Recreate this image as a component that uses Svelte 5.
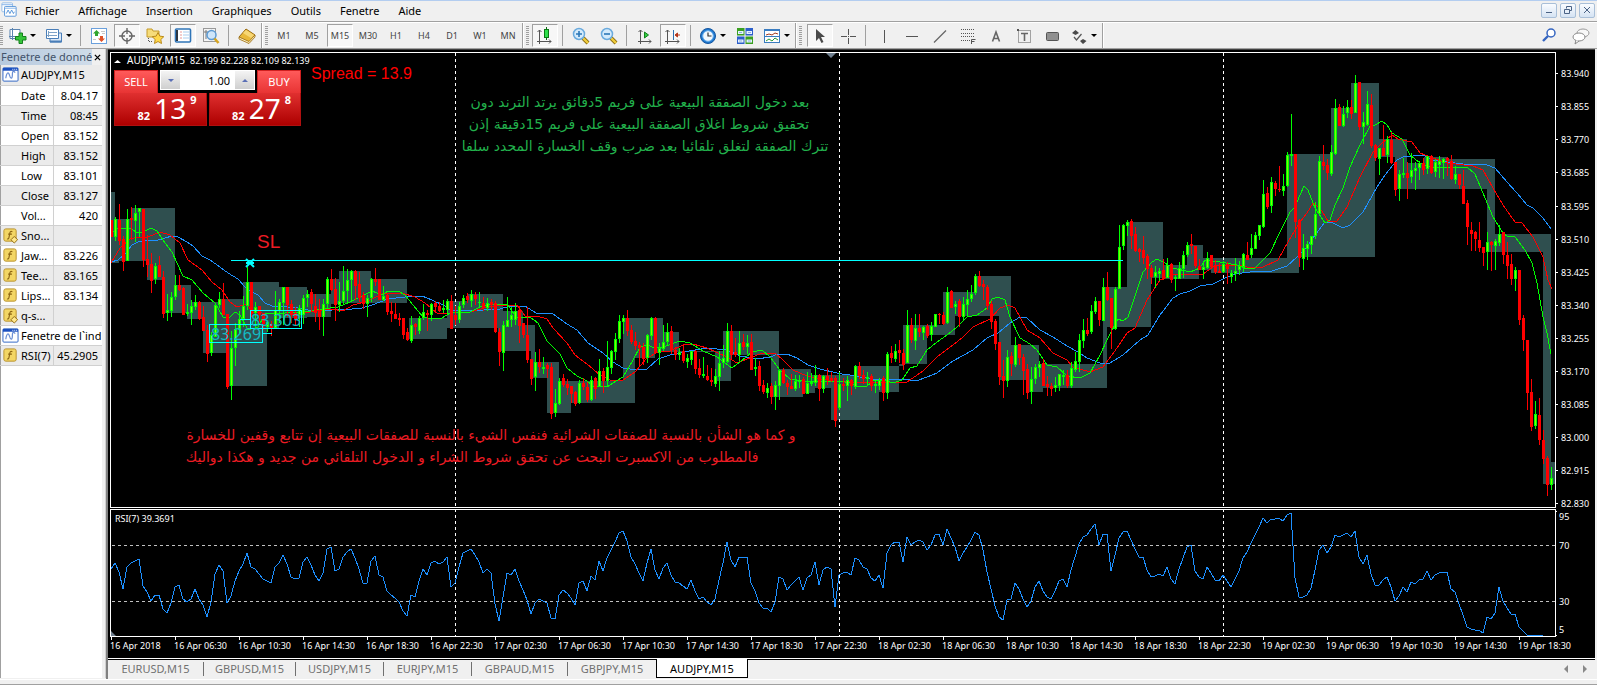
<!--
  Trading terminal: menu bar, toolbars, data window and a candlestick chart
  with three moving averages and an RSI pane below it.
-->
<script lang="ts">
	// direction, high, body top, body bottom, low (chart units, one bar every 4)
	const bars = `
r 220 220 237 237,g 217 219 237 241,r 204 220 241 245,r 236 239 262 271,g 209 219 261 261,r 207 218 220 240,
g 205 213 221 242,g 208 208 212 237,r 209 209 260 267,r 235 259 265 277,r 253 264 281 293,g 263 266 279 284,
r 256 265 277 277,r 271 277 314 318,g 294 310 313 321,g 292 297 311 317,g 275 285 297 300,r 275 285 290 291,
r 287 288 315 315,g 304 312 314 316,g 300 306 313 325,g 295 302 307 310,r 301 302 319 320,r 306 317 331 331,
r 325 330 354 362,g 332 335 353 356,g 303 305 337 337,g 292 299 305 308,r 283 299 315 315,r 314 314 387 389,
g 331 348 386 400,g 323 329 348 366,g 311 319 330 333,g 296 306 319 327,g 267 282 306 310,r 282 282 314 317,
g 302 307 313 327,r 306 306 315 323,r 313 314 324 330,g 320 322 327 332,r 321 324 329 336,g 291 310 328 329,
g 299 302 311 323,g 287 287 303 325,r 287 287 305 317,r 300 304 315 323,r 307 313 319 325,g 305 308 315 327,
g 295 298 315 324,g 290 294 298 307,r 289 292 304 311,r 294 306 313 322,r 299 310 317 330,g 299 304 317 336,
g 277 279 304 308,r 269 279 290 291,r 278 289 305 321,g 282 301 305 312,g 266 291 301 304,g 269 280 291 304,
g 270 271 280 302,r 270 271 286 300,r 272 284 298 302,r 292 295 304 309,g 295 298 304 317,g 278 279 298 302,
r 268 279 282 286,r 279 279 300 300,g 286 296 300 301,r 294 295 312 315,r 302 311 314 322,r 303 314 319 319,
r 313 318 320 326,r 318 318 335 339,r 328 332 340 341,g 316 325 341 343,r 323 324 327 335,g 316 318 331 334,
g 304 312 318 320,r 310 313 315 331,g 303 304 315 321,r 301 303 307 313,r 302 306 311 312,g 300 308 310 313,
g 299 301 310 315,r 295 301 329 329,r 306 315 320 325,g 302 306 320 323,g 295 298 305 308,r 293 296 300 303,
g 290 294 301 307,r 292 295 299 305,g 292 302 303 307,r 297 303 308 311,g 298 303 308 311,r 299 302 305 310,
r 301 303 332 333,r 328 332 352 366,g 321 325 353 371,g 297 320 327 327,g 307 315 320 327,g 303 311 320 325,
r 306 310 326 343,r 323 323 335 338,r 307 335 360 363,r 359 359 379 385,g 352 362 377 391,r 349 362 367 373,
g 357 367 369 374,r 363 365 369 378,r 363 367 414 419,g 389 403 413 417,g 378 381 404 405,r 374 378 385 387,
r 379 384 388 395,r 386 386 394 403,r 391 392 404 406,g 380 383 403 404,r 378 383 387 390,r 382 387 400 402,
g 376 380 400 401,r 377 378 389 399,g 359 371 387 387,r 368 371 381 393,g 341 367 381 387,g 350 351 368 374,
g 333 339 352 360,g 315 321 339 343,g 315 318 322 334,r 310 318 331 336,r 325 330 342 344,r 332 341 346 350,
r 342 345 348 367,r 343 347 359 365,g 334 335 358 363,g 317 318 336 340,r 317 318 353 353,g 343 348 353 365,
g 325 342 349 351,g 323 332 342 345,r 326 331 350 354,r 347 350 355 360,g 348 352 355 360,r 344 351 361 363,
g 354 358 362 368,g 351 351 360 365,r 350 351 369 374,r 359 368 375 378,g 357 374 376 378,r 365 376 380 381,
r 368 380 382 386,g 369 376 384 387,g 351 363 377 391,g 345 358 363 368,g 323 331 362 363,r 325 331 355 359,
r 338 352 355 357,g 331 343 355 361,r 334 342 347 350,g 335 343 347 354,r 334 342 370 370,g 358 367 369 376,
r 361 366 386 391,r 380 385 392 394,g 383 388 393 398,r 383 386 397 404,g 381 385 397 410,g 369 370 386 400,
r 368 370 383 384,r 380 383 387 395,r 374 386 389 389,g 375 381 389 391,g 375 380 382 388,r 377 379 394 394,
g 372 383 394 394,g 373 382 384 386,g 365 375 383 386,r 374 375 389 401,g 375 376 389 393,r 368 376 380 385,
r 372 378 380 382,r 376 378 421 427,g 372 384 408 410,r 378 384 386 391,g 376 380 386 401,r 379 380 386 395,
g 365 366 387 389,r 362 366 376 379,r 370 375 379 384,g 372 377 379 385,r 374 376 386 391,g 380 384 386 393,
g 378 380 386 390,r 376 378 393 401,g 352 354 393 399,r 346 353 358 363,g 344 351 359 362,r 340 350 353 363,
r 349 353 365 370,g 310 325 363 363,r 318 325 340 343,g 314 328 341 350,r 314 328 332 337,g 326 327 333 340,
r 324 326 336 338,g 322 326 335 341,g 314 314 327 327,r 313 314 315 324,r 312 315 324 325,g 287 292 323 324,
r 290 291 308 308,g 301 304 307 314,r 299 301 317 327,g 297 304 317 320,g 290 299 305 316,g 285 294 299 302,
g 274 276 293 295,r 271 276 286 287,r 280 284 287 300,r 285 287 306 310,r 301 304 322 329,r 319 321 344 350,
r 342 342 377 385,r 360 376 381 398,g 350 357 381 387,r 352 356 364 376,g 337 345 365 367,r 344 344 358 365,
r 354 357 371 395,r 364 369 393 399,g 367 379 392 404,g 364 367 379 384,g 361 364 368 377,r 359 363 386 386,
r 376 384 387 396,r 383 386 389 396,g 377 385 388 392,g 374 374 386 391,g 370 375 377 385,r 370 375 386 388,
g 362 368 386 388,g 352 361 370 372,g 334 340 362 372,g 319 330 341 348,r 318 330 334 336,g 305 311 332 334,
g 297 301 312 314,r 301 301 320 326,g 278 287 321 321,r 272 287 300 301,r 298 298 328 349,g 287 289 329 330,
g 225 247 289 289,g 224 225 246 250,g 220 222 226 236,r 219 221 236 249,r 227 234 251 252,r 248 249 252 262,
r 236 250 258 264,r 254 256 269 279,r 265 268 277 284,g 266 272 277 288,g 268 271 274 281,r 259 270 279 280,
g 258 265 278 278,r 263 264 280 283,g 275 277 279 291,g 262 268 279 279,g 251 255 269 278,g 242 245 255 257,
r 234 244 246 254,r 246 246 266 268,r 259 266 270 270,g 263 267 270 279,g 252 258 268 269,r 255 255 267 268,
r 260 265 272 274,r 263 271 273 273,g 261 264 272 273,r 262 264 269 284,g 270 273 277 283,g 258 271 274 281,
g 261 266 270 275,g 253 254 267 272,r 242 255 260 260,g 234 248 255 258,g 232 235 249 249,g 225 225 236 240,
g 180 194 227 228,r 187 193 207 209,g 177 182 206 213,r 181 183 189 196,r 166 189 190 192,g 174 186 191 196,
g 152 155 186 187,g 114 154 156 166,r 154 154 222 238,r 219 220 258 267,g 234 248 259 270,g 241 244 249 260,
g 236 236 245 254,g 202 214 236 239,g 156 161 214 214,r 145 162 166 170,r 159 165 173 180,g 145 152 174 176,
g 99 108 154 155,r 104 107 126 126,g 106 114 126 127,g 100 107 113 118,r 100 107 114 119,g 75 83 113 113,
r 82 82 127 130,g 112 122 127 144,g 91 104 125 126,r 94 105 146 148,r 144 145 158 161,g 148 148 159 175,
r 125 148 156 156,g 136 139 155 163,r 132 140 163 164,r 162 162 190 196,g 170 174 189 201,g 158 173 175 178,
r 162 173 178 199,g 153 170 177 183,g 162 168 171 190,g 161 163 168 180,r 158 163 170 175,g 156 156 169 174,
r 155 156 173 174,g 159 162 172 177,g 156 161 165 178,g 158 159 163 179,r 157 158 161 176,r 155 161 179 180,
g 166 174 180 184,r 174 174 185 189,r 170 186 204 204,r 200 203 227 245,r 222 230 234 251,r 231 232 239 251,
r 222 240 248 252,r 247 247 253 266,g 232 242 252 270,r 241 242 245 271,g 239 241 246 270,g 225 234 243 246,
r 232 232 255 264,r 242 255 266 279,r 254 264 279 285,g 267 270 279 291,r 270 270 320 325,r 315 318 340 351,
r 340 340 393 410,r 379 392 427 431,g 401 414 426 429,r 398 415 440 445,r 430 440 459 464,r 456 458 485 496,
g 467 478 485 490`
		.split(',')
		.map((row, i) => {
			const [dir, ...v] = row.trim().split(' ');
			const [high, top, bottom, low] = v.map(Number);
			return { x: 111.5 + i * 4, up: dir === 'g', high, top, bottom, low };
		});

	const wicks = (up: boolean) =>
		bars.filter((b) => b.up === up).map((b) => `M${b.x} ${b.high}V${b.low}`).join('');
	const bodies = (up: boolean) =>
		bars.filter((b) => b.up === up).map((b) => `M${b.x} ${b.top}V${Math.max(b.bottom, b.top + 1)}`).join('');
	const cores = bars
		.filter((b) => b.up && b.bottom - b.top > 2)
		.map((b) => `M${b.x} ${b.top + 1}V${b.bottom - 1}`)
		.join('');

	// x1, y1, x2, y2
	const zones = `111 192 115 263,115 219 119 263,119 219 132 261,132 208 147 261,147 208 165 280,163 208 175 313,
175 285 191 313,187 302 203 319,203 302 229 353,219 299 243 353,229 299 243 386,243 282 267 386,267 282 279 328,
279 287 307 318,307 294 331 317,331 279 339 304,339 271 371 303,371 279 407 303,409 318 447 339,447 301 468 328,
468 294 503 328,498 294 503 351,503 311 523 351,523 325 535 351,531 325 535 378,535 362 547 378,547 362 559 413,
559 381 571 413,571 381 635 403,623 318 635 403,635 318 655 358,655 318 663 352,663 332 679 352,679 351 723 352,
715 351 731 381,723 331 779 355,771 331 779 397,779 369 803 397,803 369 811 393,811 375 815 393,815 375 831 388,
831 375 855 420,855 366 879 420,879 366 899 392,899 364 903 366,903 325 927 364,927 325 943 335,943 292 955 335,
955 292 975 316,975 276 1011 316,999 276 1011 380,1011 345 1039 380,1029 345 1039 392,1039 364 1043 392,
1043 364 1107 388,1103 287 1107 388,1107 287 1127 327,1127 222 1151 327,1151 222 1163 278,1163 265 1187 279,
1187 245 1199 279,1199 245 1203 270,1203 258 1211 270,1211 258 1287 273,1287 154 1299 273,1299 154 1331 257,
1331 108 1351 257,1351 83 1375 257,1375 83 1379 157,1379 139 1395 157,1395 139 1407 189,1407 163 1424 189,
1424 157 1447 189,1447 159 1495 189,1487 159 1495 252,1495 234 1551 252,1543 234 1551 484,1551 462 1555 484`
		.split(',')
		.map((z) => {
			const [x1, y1, x2, y2] = z.trim().split(' ').map(Number);
			return `M${x1} ${y1}H${x2}V${y2}H${x1}Z`;
		})
		.join('');

	const jaws =
		'111,262 118,260 125,254 132,245 138,242 148,240 158,240 172,236 178,237 187,242 193,246 202,256 210,260 220,267 228,273 238,279 245,287 252,292 258,295 265,303 272,306 287,307 298,308 308,310 332,310 352,309 362,308 372,305 388,299 405,297 422,296 432,300 445,306 450,310 483,310 500,309 510,306 525,306 536,313 553,314 567,324 577,330 588,343 603,353 613,362 623,368 637,370 647,369 658,359 670,355 683,352 707,348 727,350 740,356 757,359 770,357 778,354 787,354 797,358 808,365 820,369 837,373 842,374 850,375 860,377 873,379 903,379 916,381 927,377 937,373 953,361 973,350 987,338 998,333 1010,323 1020,317 1027,318 1040,330 1053,337 1067,346 1078,352 1087,358 1100,363 1110,363 1123,355 1140,340 1148,335 1160,315 1173,298 1180,294 1190,291 1200,286 1213,284 1225,278 1235,274 1250,272 1272,271 1287,266 1297,257 1307,247 1315,235 1325,222 1333,223 1343,228 1350,225 1363,212 1377,187 1385,175 1397,160 1403,157 1413,156 1423,155 1433,160 1447,162 1463,164 1487,165 1495,168 1507,182 1517,193 1527,205 1533,208 1543,218 1551,229';
	const teeth =
		'111,263 120,248 130,239 138,237 148,237 160,232 170,235 180,243 188,260 202,270 212,282 222,290 230,302 237,307 247,304 252,312 262,313 285,314 300,314 315,311 332,309 343,311 353,305 368,301 382,294 402,293 415,297 425,303 438,314 450,313 470,312 488,307 500,305 517,305 525,316 537,316 547,319 553,328 567,343 575,355 587,364 600,375 610,380 623,380 635,372 647,358 658,352 670,351 683,345 693,344 707,348 727,357 737,363 747,359 760,354 775,353 783,360 793,370 807,376 820,379 833,381 850,382 870,383 883,382 907,382 923,371 937,357 953,345 963,337 973,327 990,319 1000,308 1008,305 1015,308 1027,330 1040,338 1053,353 1067,360 1073,367 1090,372 1103,367 1117,348 1127,333 1135,328 1147,300 1160,280 1173,275 1203,274 1213,267 1220,265 1237,265 1247,267 1263,267 1278,260 1288,242 1300,222 1307,213 1313,203 1320,208 1328,221 1337,221 1347,207 1360,177 1373,152 1382,143 1392,135 1398,139 1412,142 1420,153 1430,157 1447,163 1473,166 1483,170 1493,188 1503,205 1515,222 1522,223 1533,237 1543,257 1548,280 1552,289';
	const lips =
		'112,233 118,228 132,229 137,233 143,232 151,228 157,231 163,240 172,252 183,276 192,280 203,293 215,303 223,317 230,317 235,312 240,315 248,330 258,327 265,314 285,313 305,312 322,309 338,307 352,301 372,291 382,295 388,291 398,291 405,295 413,305 423,317 432,319 442,318 450,313 470,312 480,307 490,304 507,304 517,318 530,317 538,323 547,341 560,354 567,368 577,376 587,381 593,386 607,387 613,383 623,377 632,362 640,347 647,345 655,348 663,347 680,341 690,343 703,351 717,357 732,368 740,362 752,352 762,350 770,357 780,370 790,379 803,381 840,381 850,383 857,386 867,386 873,381 883,380 893,383 902,380 910,368 917,366 927,350 937,342 947,335 957,327 967,317 977,315 987,308 992,299 998,297 1005,300 1010,317 1020,338 1030,344 1037,350 1047,365 1057,367 1067,376 1080,378 1090,373 1100,355 1108,338 1118,319 1123,321 1128,317 1137,290 1143,272 1152,262 1157,259 1165,263 1173,268 1190,272 1200,268 1205,260 1220,262 1237,265 1247,269 1255,268 1270,253 1280,232 1290,212 1295,207 1300,195 1304,186 1308,190 1315,208 1325,223 1330,220 1335,205 1343,188 1350,167 1360,145 1370,126 1375,125 1382,121 1387,125 1392,133 1402,139 1410,155 1420,163 1430,167 1467,167 1475,174 1483,193 1493,217 1503,233 1507,236 1515,237 1525,250 1532,263 1537,283 1543,317 1547,333 1551,354';

	const rsi = [
		69, 63, 72, 89, 67, 63, 61, 59, 86, 92, 101, 95, 95, 109, 113, 103, 87, 85, 99, 102, 99, 89, 99, 105, 117, 102, 74,
		65, 71, 103, 96, 81, 71, 64, 53, 67, 69, 74, 79, 81, 83, 67, 63, 55, 64, 77, 79, 78, 62, 57, 65, 75, 81, 73, 49, 47,
		71, 69, 57, 52, 49, 58, 69, 83, 83, 61, 56, 75, 77, 91, 95, 98, 102, 111, 116, 95, 97, 81, 69, 75, 63, 61, 64, 62,
		57, 87, 83, 67, 53, 51, 49, 55, 62, 73, 69, 73, 104, 121, 97, 73, 75, 69, 81, 90, 100, 114, 103, 99, 101, 103, 118,
		119, 95, 90, 93, 98, 105, 83, 81, 91, 76, 80, 61, 71, 58, 50, 42, 33, 31, 41, 57, 64, 73, 81, 63, 49, 70, 79, 68,
		63, 75, 82, 83, 86, 89, 80, 91, 99, 97, 102, 105, 99, 80, 63, 42, 60, 67, 57, 57, 57, 83, 91, 103, 108, 108, 112,
		102, 77, 79, 90, 85, 81, 77, 90, 78, 75, 62, 85, 70, 67, 69, 107, 75, 73, 72, 75, 58, 60, 67, 69, 78, 81, 75, 88,
		53, 45, 42, 42, 62, 37, 45, 42, 40, 42, 50, 45, 35, 34, 45, 29, 38, 47, 61, 53, 47, 40, 32, 35, 50, 72, 89, 106,
		117, 120, 100, 99, 83, 89, 99, 107, 101, 87, 81, 91, 97, 99, 91, 81, 79, 87, 70, 57, 44, 37, 35, 29, 24, 45, 34, 34,
		71, 55, 38, 32, 31, 40, 49, 57, 57, 70, 77, 76, 74, 76, 67, 79, 84, 69, 58, 47, 45, 71, 77, 79, 67, 73, 80, 81, 75,
		81, 87, 79, 71, 58, 52, 43, 35, 27, 18, 23, 19, 19, 18, 21, 15, 13, 78, 97, 97, 95, 88, 70, 50, 45, 53, 47, 35, 37,
		35, 33, 37, 31, 57, 64, 55, 74, 85, 85, 80, 77, 87, 101, 96, 87, 92, 82, 84, 80, 79, 71, 80, 75, 73, 72, 72, 89, 92,
		104, 115, 127, 129, 130, 130, 133, 117, 119, 113, 87, 101, 108, 114, 114, 127, 131, 135, 135, 135, 135, 135
	]
		.map((y, i) => `${111 + i * 4},${500 + y}`)
		.join(' ');

	const prices = [
		['83.940', 73], ['83.855', 106], ['83.770', 139], ['83.685', 172], ['83.595', 206], ['83.510', 239], ['83.425', 272],
		['83.340', 305], ['83.255', 338], ['83.170', 371], ['83.085', 404], ['83.000', 437], ['82.915', 470], ['82.830', 503]
	] as [string, number][];
	const levels = [['95', 516], ['70', 545], ['30', 601], ['5', 629]] as [string, number][];
	const times = [
		'16 Apr 2018', '16 Apr 06:30', '16 Apr 10:30', '16 Apr 14:30', '16 Apr 18:30', '16 Apr 22:30', '17 Apr 02:30',
		'17 Apr 06:30', '17 Apr 10:30', '17 Apr 14:30', '17 Apr 18:30', '17 Apr 22:30', '18 Apr 02:30', '18 Apr 06:30',
		'18 Apr 10:30', '18 Apr 14:30', '18 Apr 18:30', '18 Apr 22:30', '19 Apr 02:30', '19 Apr 06:30', '19 Apr 10:30',
		'19 Apr 14:30', '19 Apr 18:30'
	];

	const menus = ['Fichier', 'Affichage', 'Insertion', 'Graphiques', 'Outils', 'Fenetre', 'Aide'];
	const frames = ['M1', 'M5', 'M15', 'M30', 'H1', 'H4', 'D1', 'W1', 'MN'];
	const tabs = ['EURUSD,M15', 'GBPUSD,M15', 'USDJPY,M15', 'EURJPY,M15', 'GBPAUD,M15', 'GBPJPY,M15', 'AUDJPY,M15'];
	const rows = [
		{ label: 'AUDJPY,M15', icon: 'window' },
		{ label: 'Date', value: '8.04.17' },
		{ label: 'Time', value: '08:45' },
		{ label: 'Open', value: '83.152' },
		{ label: 'High', value: '83.152' },
		{ label: 'Low', value: '83.101' },
		{ label: 'Close', value: '83.127' },
		{ label: 'Vol...', value: '420' },
		{ label: 'Sno...', value: '', icon: 'fnd' },
		{ label: 'Jaw...', value: '83.226', icon: 'fn' },
		{ label: 'Tee...', value: '83.165', icon: 'fn' },
		{ label: 'Lips...', value: '83.134', icon: 'fn' },
		{ label: 'q-s...', value: '', icon: 'fnd' },
		{ label: 'Fenetre de l`ind', icon: 'window' },
		{ label: 'RSI(7)', value: '45.2905', icon: 'fn' }
	];

	type Tool = { icon: string; name: string; on?: boolean; drop?: boolean };
	const fileTools: (Tool | null)[] = [
		{ icon: 'new', name: 'Nouveau graphique', drop: true },
		{ icon: 'profiles', name: 'Profils', drop: true },
		null,
		{ icon: 'market', name: 'Observation du marché' },
		{ icon: 'target', name: 'Fenetre de données', on: true },
		{ icon: 'navigator', name: 'Navigateur' },
		{ icon: 'terminal', name: 'Terminal', on: true },
		{ icon: 'tester', name: 'Testeur de stratégie' },
		null,
		{ icon: 'order', name: 'Nouvel ordre' }
	];
	const chartTools: (Tool | null)[] = [
		{ icon: 'candle', name: 'Chandeliers', on: true },
		null,
		{ icon: 'zoomin', name: 'Zoom avant' },
		{ icon: 'zoomout', name: 'Zoom arrière' },
		null,
		{ icon: 'scroll', name: 'Défilement automatique' },
		{ icon: 'shift', name: 'Décalage du graphique', on: true },
		null,
		{ icon: 'clock', name: 'Périodes', drop: true },
		{ icon: 'tile', name: 'Mosaïque' },
		{ icon: 'template', name: 'Modèles', drop: true }
	];
	const drawTools: (Tool | null)[] = [
		{ icon: 'cursor', name: 'Curseur', on: true },
		{ icon: 'cross', name: 'Réticule' },
		null,
		{ icon: 'vline', name: 'Ligne verticale' },
		{ icon: 'hline', name: 'Ligne horizontale' },
		{ icon: 'trend', name: 'Ligne de tendance' },
		{ icon: 'fibo', name: 'Fibonacci' },
		{ icon: 'text', name: 'Texte' },
		{ icon: 'label', name: 'Étiquette' },
		{ icon: 'rect', name: 'Rectangle' },
		{ icon: 'arrows', name: 'Flèches', drop: true }
	];

	let volume = $state('1.00');
	let frame = $state('M15');
	let activeTab = $state('AUDJPY,M15');
</script>

{#snippet glyph(name: string)}
	<svg class="glyph" viewBox="0 0 18 18" aria-hidden="true">
		{#if name === 'new'}
			<path d="M1 2.500h10v9H1z" fill="#fff" stroke="#5b84b0" />
			<path d="M3.500 1v12M0 9.500h12" stroke="#5b84b0" />
			<path d="M10 6h3.500v3.500H17V13h-3.500v3.500H10V13H6.500V9.500H10z" fill="#35c43a" stroke="#14801c" />
		{:else if name === 'profiles'}
			<path d="M5 6h11.500v9H5z" fill="#dbe9f8" stroke="#4a7eb8" />
			<path d="M1.500 2.500h12v9h-12z" fill="#fff" stroke="#4a7eb8" />
			<path d="M3.500 4v6M2 8.500h10M3 5.500h9" fill="none" stroke="#7fa3c8" />
			<path d="M5 14.500h11.500" stroke="#4a7eb8" stroke-width="2" />
		{:else if name === 'market'}
			<rect x="1.5" y="1.5" width="15" height="15" fill="#fff" stroke="#6ba0dc" />
			<path d="M6.500 3l3.500 3.500H8V9H5V6.500H3z" fill="#2fa52f" />
			<path d="M11.500 15L8 11.500h2V9h3v2.500h2z" fill="#e0532a" />
			<path d="M11 4.500h4M12 6.500h3M3 12.500h3" stroke="#c8c8c8" />
		{:else if name === 'target'}
			<circle cx="9" cy="9" r="5" fill="none" stroke="#666" stroke-width="1.400" />
			<path d="M9 1v6M9 11v6M1 9h6M11 9h6" stroke="#666" stroke-width="1.400" />
		{:else if name === 'navigator'}
			<path d="M1 2h5l1 2h6v6H1z" fill="#f6dc7a" stroke="#c49a28" />
			<path d="M2.500 11v4M3 14.500h4" stroke="#555" stroke-dasharray="1 1" />
			<path d="M12 5.500l1.800 3.600 4 .6-3 2.800.7 4-3.500-2-3.500 2 .7-4-3-2.800 4-.6z" fill="#ffd84a" stroke="#b98a1d" />
		{:else if name === 'terminal'}
			<rect x="1.5" y="2" width="15" height="13" rx="1" fill="#fff" stroke="#2f75b8" stroke-width="1.600" />
			<rect x="2" y="3" width="2" height="11" fill="#2c3742" />
			<path d="M6.500 5h1M6.500 8h1M6.500 11h1" stroke="#c33" />
			<path d="M9 5h6M9 8h6M9 11h6" stroke="#a9cdee" />
		{:else if name === 'tester'}
			<rect x="1.500" y="1.500" width="12" height="13" fill="#f4f4f4" stroke="#999" />
			<path d="M4 3v9M2 5h10" stroke="#777" />
			<circle cx="9.500" cy="8" r="4.500" fill="#cfe6fa" stroke="#5d9bd3" stroke-width="1.500" />
			<path d="M12.500 11.500l4 4.500" stroke="#d5a421" stroke-width="2.600" />
		{:else if name === 'order'}
			<path d="M1 10l7-8 9 6-6 8z" fill="#e9b93a" stroke="#9a6b10" />
			<path d="M1 10l10 4.500 6-6.500v2l-6 6.500L1 12z" fill="#fff3c0" stroke="#9a6b10" stroke-width=".8" />
			<path d="M8 3l8 5-3 3-8-5z" fill="#f7d774" />
		{:else if name === 'candle'}
			<path d="M3.500 3v14M1 14.500h14M1.500 5l2-2 2 2M13 12.500l2 2-2 2" fill="none" stroke="#555" />
			<path d="M10.500 0v13" stroke="#0a6b12" />
			<rect x="8.500" y="2.500" width="4" height="8" fill="#2ee04a" stroke="#0a7a14" />
		{:else if name === 'zoomin' || name === 'zoomout'}
			<path d="M11 11l5 5" stroke="#8a6a12" stroke-width="4" />
			<path d="M11 11l5 5" stroke="#f0cd3c" stroke-width="2.400" />
			<circle cx="7" cy="7" r="5.500" fill="#d5ebfb" stroke="#6aaadd" stroke-width="1.500" />
			<path d={name === 'zoomin' ? 'M4 7h6M7 4v6' : 'M4 7h6'} stroke="#2d78b8" stroke-width="1.600" />
		{:else if name === 'scroll'}
			<path d="M4.500 3v14M2 14.500h13M2.500 5l2-2 2 2M13 12.500l2 2-2 2" fill="none" stroke="#555" />
			<path d="M8.500 5v6l4-3z" fill="#2ecc40" stroke="#14801c" />
		{:else if name === 'shift'}
			<path d="M3.500 3v14M1 14.500h14M1.500 5l2-2 2 2M13 12.500l2 2-2 2" fill="none" stroke="#555" />
			<path d="M9.500 3v10" stroke="#2d6fb0" />
			<path d="M16 8h-4M13.500 6L11 8l2.500 2z" fill="#b5371c" stroke="#b5371c" />
		{:else if name === 'clock'}
			<circle cx="9" cy="9" r="7.500" fill="#1f78cf" stroke="#1556a0" />
			<circle cx="9" cy="9" r="5.300" fill="#f2f8fe" stroke="#6ab0ee" />
			<path d="M9 5.500V9h3.500" fill="none" stroke="#333" stroke-width="1.200" />
		{:else if name === 'tile'}
			<path d="M1 1h7.500v7.500H1zM9.500 9.500H17V17H9.500z" fill="#3aa021" />
			<path d="M9.500 1H17v7.500H9.500zM1 9.500h7.500V17H1z" fill="#2c5fcb" />
			<path d="M2 4h5.500v3H2zM10.500 4H16v3h-5.500zM2 12.500h5.500v3H2zM10.500 12.500H16v3h-5.500z" fill="#e8f2ff" />
			<path d="M3 5.500h3M12 5.500h3M3 14h3M12 14h3" stroke="#8fb4dc" />
		{:else if name === 'template'}
			<rect x="1.500" y="2.500" width="15" height="13" fill="#fff" stroke="#3a7cc0" />
			<path d="M1 3.500h16M1 9.500h16" stroke="#3a7cc0" />
			<path d="M3 8l3-1 3 1 3-2 3 1" fill="none" stroke="#a33b1e" />
			<path d="M3 14l3-2 3 2 3-3 3 2" fill="none" stroke="#2b9a3a" />
		{:else if name === 'cursor'}
			<path d="M5 2v12l3-3 2.500 5 2-1-2.500-5h4z" fill="#4a4a4a" />
		{:else if name === 'cross'}
			<path d="M9.500 2v6M9.500 11v6M2 9.500h6M11 9.500h6M9 9.500h1" stroke="#555" />
		{:else if name === 'vline'}
			<path d="M9.500 3v13" stroke="#555" />
		{:else if name === 'hline'}
			<path d="M3 9.500h12" stroke="#555" />
		{:else if name === 'trend'}
			<path d="M3 15.500L15 3.500" stroke="#666" stroke-width="1.200" />
		{:else if name === 'fibo'}
			<path d="M2 2.500h14M2 6.500h14M2 9.500h14M2 13.500h9" stroke="#555" stroke-dasharray="1 1" />
			<path d="M12.500 17v-4.500h4M12.500 14.500h3" fill="none" stroke="#555" />
		{:else if name === 'text'}
			<path d="M5.500 14.500L9 5l3.500 9.500M6.500 11.500h5" fill="none" stroke="#666" stroke-width="1.600" />
		{:else if name === 'label'}
			<rect x="3.500" y="3.500" width="12" height="12" fill="none" stroke="#555" stroke-dasharray="1 1" />
			<path d="M2 2h2v2H2z" fill="#555" />
			<path d="M6 6.500h7M9.500 6v8" stroke="#666" stroke-width="1.600" />
		{:else if name === 'rect'}
			<rect x="3.500" y="5.500" width="12" height="8" rx="1" fill="#909090" stroke="#555" />
		{:else if name === 'arrows'}
			<path d="M2 6l3.500-3L9 6 5.500 8zM10 14l3-2 3.500 2-3.500 3z" fill="#4a4a4a" />
			<path d="M4 10l2.500 3 5-6" fill="none" stroke="#555" stroke-width="1.200" />
		{:else if name === 'window'}
			<rect x="1" y="2" width="16" height="14" rx="1" fill="#fff" stroke="#2b62c4" />
			<path d="M1 2h16v3H1z" fill="#1b50c0" />
			<path d="M11 3.500h5" stroke="#fff" stroke-dasharray="1 1" />
			<path d="M4 13c1-7 3-7 4-3s3 4 3-1 2-3 3-2" fill="none" stroke="#6b8fd4" stroke-width="1.300" />
		{:else if name === 'fn' || name === 'fnd'}
			<rect x="2" y="2" width="13" height="13" rx="2" fill="#f3d665" stroke="#b8912a" />
			<path d="M11 5c-2-1-2.500 0-2.800 2l-.8 4c-.2 1.500-1 2-2 1.500M6.500 7.500h4" fill="none" stroke="#8c6512" stroke-width="1.200" />
			{#if name === 'fnd'}
				<path d="M13 10l3.500 3.500L13 17l-3.500-3.500z" fill="#ffe88a" stroke="#8c6512" />
			{/if}
		{:else if name === 'app'}
			<rect x="1" y="1" width="12" height="10" rx="1" fill="#fff" stroke="#8db8e6" />
			<rect x="4" y="5" width="13" height="11" rx="1" fill="#fff" stroke="#4f8fd6" />
			<path d="M4 7h13M1 3h12" stroke="#7fb0e8" />
			<path d="M6 13l2-4 2 4 2-4 2 4 1-2" fill="none" stroke="#4f8fd6" />
		{:else if name === 'search'}
			<circle cx="10" cy="6" r="4" fill="#fff" stroke="#3565c0" stroke-width="1.500" />
			<path d="M7 9l-5 5" stroke="#3565c0" stroke-width="2.400" />
		{:else if name === 'chat'}
			<ellipse cx="11" cy="6" rx="6" ry="4" fill="#f8f8f8" stroke="#999" />
			<ellipse cx="7" cy="10" rx="6" ry="4" fill="#fff" stroke="#888" />
			<path d="M4 13l-1 4 4-3" fill="#fff" stroke="#888" />
		{/if}
	</svg>
{/snippet}

{#snippet toolbar(tools: (Tool | null)[])}
	{#each tools as tool}
		{#if tool}
			<button class="tool" class:on={tool.on} class:drop={tool.drop} aria-label={tool.name}>
				{@render glyph(tool.icon)}
				{#if tool.drop}<span class="caret"></span>{/if}
			</button>
		{:else}
			<span class="sep"></span>
		{/if}
	{/each}
{/snippet}

<div class="terminal">
	<header>
		<nav class="menu">
			{@render glyph('app')}
			{#each menus as item}
				<button>{item}</button>
			{/each}
			<div class="win">
				<button aria-label="Réduire"><svg viewBox="0 0 10 10"><path d="M2 7.500h6" /></svg></button>
				<button aria-label="Restaurer"><svg viewBox="0 0 10 10"><path d="M3.500 3.500v-2h5v4h-2M1.500 4.500h5v4h-5z" /></svg></button>
				<button aria-label="Fermer"><svg viewBox="0 0 10 10"><path d="M2 2l6 6M8 2L2 8" /></svg></button>
			</div>
		</nav>
		<div class="bars">
			<div class="group">
				<span class="grip slim"></span>
				{@render toolbar(fileTools)}
			</div>
			<div class="group">
				<span class="grip"></span>
				{#each frames as f}
					<button class="tool frame" class:on={f === frame} onclick={() => (frame = f)}>{f}</button>
				{/each}
			</div>
			<div class="group">
				<span class="grip"></span>
				{@render toolbar(chartTools)}
			</div>
			<div class="group">
				<span class="grip wide"></span>
				{@render toolbar(drawTools)}
			</div>
			<div class="side">
				<button class="tool" aria-label="Recherche">{@render glyph('search')}</button>
				<button class="tool" aria-label="Messages">{@render glyph('chat')}</button>
			</div>
		</div>
	</header>

	<div class="work">
		<aside>
			<div class="title">
				<h2>Fenetre de donné</h2>
				<button aria-label="Fermer la fenetre">
					<svg viewBox="0 0 8 8"><path d="M1 1l6 6M7 1L1 7" stroke="#000" stroke-width="1.500" /></svg>
				</button>
			</div>
			<table>
				<colgroup><col class="name" /><col /></colgroup>
				<tbody>
					{#each rows as row}
						<tr>
							<th colspan={row.value === undefined ? 2 : 1} scope="row">
								<div class="cell">
									<span class="slot">{#if row.icon}{@render glyph(row.icon)}{/if}</span>{row.label}
								</div>
							</th>
							{#if row.value !== undefined}<td>{row.value}</td>{/if}
						</tr>
					{/each}
				</tbody>
			</table>
		</aside>

		<main>
			<div class="chart">
				<svg class="plot" viewBox="108 50 1487 608" role="img" aria-label="AUDJPY,M15">
					<g shape-rendering="crispEdges" fill="none">
						<path d={zones} fill="#2f4f4f" />
						<path d="M455.500 53V636M839.500 53V636M1223.500 53V636" stroke="#fff" stroke-dasharray="3 3" />
						<path d="M112 545.500H1555M112 601.500H1555" stroke="#c0c0c0" stroke-dasharray="3 3" />
						<polyline points={jaws} stroke="#1e90ff" />
						<polyline points={teeth} stroke="#ff0000" />
						<polyline points={lips} stroke="#00ff00" />
						<path d={wicks(false)} stroke="#ff0000" />
						<path d={bodies(false)} stroke="#ff0000" stroke-width="3" />
						<path d={wicks(true)} stroke="#00ff00" />
						<path d={bodies(true)} stroke="#00ff00" stroke-width="3" />
						<path d={cores} stroke="#7fff00" />
						<polyline points={rsi} stroke="#1e90ff" />
						<path d="M231 260.500H1123" stroke="#00ffff" />
						<path d="M209.500 324.500h53v18h-53zM250.500 310.500h51v18h-51zM240 319.500h11M263 333.500h9" stroke="#00ffff" />
						<path d="M110.500 52.500H1555.500V507.500H110.500zM110.500 509.500H1555.500V636.500H110.500z" stroke="#fff" />
						{#each prices as [, y]}<path d="M1556 {y}.500h2" stroke="#fff" />{/each}
						{#each times as _, i}<path d="M{111.500 + i * 64} 637v3" stroke="#fff" />{/each}
						<path d="M1556 511.500h1M1556 635.500h1" stroke="#fff" />
					</g>
					<path d="M246 259l8 8M254 259l-8 8M246 263h8" stroke="#00ffff" stroke-width="2" />
					<path d="M826 53h10l-5 5zM111 631v5h5z" fill="#708090" />
					<path d="M114 63h7l-3.500-3z" fill="#fff" />

					<text class="pair" x="127" y="64">AUDJPY,M15</text>
					<g class="tiny">
						<text x="190" y="64">82.199 82.228 82.109 82.139</text>
						<text x="115" y="522">RSI(7) 39.3691</text>
						{#each prices as [label, y]}<text x="1561" y={y + 4}>{label}</text>{/each}
						{#each levels as [label, y]}<text x="1559" y={y + 4}>{label}</text>{/each}
						{#each times as label, i}<text x={110 + i * 64} y="649">{label}</text>{/each}
					</g>
					<text class="spread" x="311" y="79">Spread = 13.9</text>
					<text class="sl" x="257" y="248">SL</text>
					<g class="tag">
						<text x="211" y="340">83.269</text>
						<text x="251" y="326">83.303</text>
					</g>
					<g class="note green">
						<text x="640" y="107">بعد دخول الصفقة البيعية على فريم 5دقائق يرتد الترند دون</text>
						<text x="639" y="129">تحقيق شروط اغلاق الصفقة البيعية على فريم 15دقيقة إذن</text>
						<text x="645" y="151">تترك الصفقة لتغلق تلقائيا بعد ضرب وقف الخسارة المحدد سلفا</text>
					</g>
					<g class="note red">
						<text x="491" y="440">و كما هو الشأن بالنسبة للصفقات الشرائية فنفس الشيء بالنسبة للصفقات البيعية إن تتابع وقفين للخسارة</text>
						<text x="472" y="462">فالمطلوب من الاكسبرت البحث عن تحقق شروط الشراء و الدخول التلقائي من جديد و هكذا دواليك</text>
					</g>
				</svg>

				<div class="trade">
					<button class="side-btn">SELL</button>
					<div class="spin">
						<button aria-label="Diminuer"><span class="down"></span></button>
						<input aria-label="Volume" bind:value={volume} />
						<button aria-label="Augmenter"><span class="up"></span></button>
					</div>
					<button class="side-btn">BUY</button>
					<div class="quotes">
						<div class="quote"><b>82</b><span>13</span><sup>9</sup></div>
						<div class="quote"><b>82</b><span>27</span><sup>8</sup></div>
					</div>
				</div>
			</div>

			<div class="tabs">
				{#each tabs as tab}
					<button class:active={tab === activeTab} onclick={() => (activeTab = tab)}>{tab}</button>
				{/each}
				<div class="pager">
					<button aria-label="Précédent"><svg viewBox="0 0 6 8"><path d="M5 0v8L1 4z" /></svg></button>
					<button aria-label="Suivant"><svg viewBox="0 0 6 8"><path d="M1 0v8l4-4z" /></svg></button>
				</div>
			</div>
		</main>
	</div>
	<footer></footer>
</div>

<style>
	:global(body) {
		background: #f0f0f0;
	}
	.terminal {
		display: flex;
		flex-direction: column;
		min-height: 100vh;
		box-sizing: border-box;
		overflow: hidden;
		background: #f0f0f0;
		border-top: 1px solid #b3cdf0;
		font-family: 'Noto Sans', 'Open Sans', sans-serif;
		font-size: 11px;
		color: #000;
	}
	button {
		padding: 0;
		border: 0;
		background: none;
		font: inherit;
		color: inherit;
	}
	.glyph {
		display: block;
		flex: none;
		width: 18px;
		height: 18px;
	}
	.menu {
		display: flex;
		align-items: center;
		gap: 19px;
		height: 18px;
		padding-bottom: 2px;
		border-bottom: 1px solid #a0a0a0;
	}
	.menu > .glyph {
		width: 16px;
		height: 16px;
		margin-right: -11px;
		margin-left: 1px;
	}
	.win {
		display: flex;
		gap: 3px;
		margin-left: auto;
		padding-right: 2px;
	}
	.win button {
		width: 16px;
		height: 15px;
		border: 1px solid #a9bfd8;
		border-radius: 2px;
		background: linear-gradient(#fafcff, #d5e3f3);
	}
	.win svg {
		display: block;
		width: 10px;
		height: 10px;
		margin: 0 auto;
		fill: none;
		stroke: #4a6285;
	}
	.bars {
		display: flex;
		height: 25px;
		border-top: 1px solid #fff;
		border-bottom: 1px solid #a0a0a0;
	}
	.group {
		display: flex;
		align-items: center;
		border-right: 1px solid #a0a0a0;
		box-shadow: 1px 0 #fff;
	}
	.grip {
		width: 3px;
		height: 19px;
		margin: 0 2px 0 3px;
		background: repeating-linear-gradient(#a0a0a0 0 1px, #f0f0f0 1px 2px);
	}
	.grip.slim {
		margin: 0 2px 0 0;
	}
	.grip.wide {
		margin: 0 4px 0 3px;
	}
	.tool {
		display: flex;
		align-items: center;
		justify-content: center;
		box-sizing: border-box;
		width: 26px;
		height: 23px;
		margin: 0 1px;
		border: 1px solid transparent;
	}
	.tool.drop {
		justify-content: flex-start;
		gap: 3px;
		width: 34px;
		padding-left: 2px;
	}
	.tool.on {
		border-color: #a0a0a0 #fff #fff #a0a0a0;
		background: #f7f7f7;
	}
	.tool.frame {
		font-size: 9px;
		color: #444;
	}
	.caret {
		border: 3px solid transparent;
		border-top-color: #000;
		border-bottom: 0;
	}
	.sep {
		width: 1px;
		height: 21px;
		margin: 0 4px 0 3px;
		background: #a0a0a0;
	}
	.side {
		display: flex;
		align-items: center;
		gap: 3px;
		margin-left: auto;
		padding-right: 2px;
	}
	.work {
		display: flex;
		flex: 1;
	}
	aside {
		display: flex;
		flex-direction: column;
		flex: none;
		box-sizing: border-box;
		width: 106px;
		padding-right: 3px;
		margin-bottom: 1px;
		border-right: 1px solid #d0d0d0;
	}
	.title {
		display: flex;
		align-items: center;
		height: 16px;
	}
	h2 {
		flex: none;
		margin: 0;
		padding-left: 1px;
		white-space: nowrap;
		font-size: 11px;
		font-weight: 400;
		line-height: 16px;
		color: #43536b;
		background: linear-gradient(90deg, #b6c9de, #cfdcea);
	}
	.title button {
		flex: 1;
		height: 14px;
	}
	.title svg {
		display: block;
		width: 7px;
		height: 7px;
		margin: auto;
	}
	table {
		width: 102px;
		table-layout: fixed;
		border-collapse: collapse;
	}
	.name {
		width: 53px;
	}
	aside::after {
		content: '';
		flex: 1;
		background: #fff;
		border-left: 1px solid #a0a0a0;
	}
	tr {
		height: 20px;
		background: #fff;
	}
	tr:nth-child(odd) {
		background: #ebebeb;
	}
	th,
	td {
		box-sizing: border-box;
		height: 20px;
		padding: 0;
		border-bottom: 1px solid #d0d0d0;
		font-weight: 400;
		line-height: 19px;
		white-space: nowrap;
		overflow: hidden;
	}
	th {
		border-left: 1px solid #a0a0a0;
		text-align: left;
	}
	td {
		border-left: 1px solid #d0d0d0;
		padding-right: 4px;
		text-align: right;
	}
	.cell {
		display: flex;
		align-items: center;
	}
	.slot {
		flex: none;
		width: 20px;
	}
	.slot .glyph {
		width: 17px;
		height: 17px;
		margin-left: 1px;
	}
	main {
		flex: 1;
		min-width: 0;
		padding-right: 2px;
		border-left: 2px solid #808080;
	}
	.chart {
		position: relative;
		border-top: 1px solid #404040;
		border-bottom: 1px solid #fff;
		background: #000;
	}
	.plot {
		display: block;
		width: 100%;
		height: auto;
	}
	.tiny text {
		font-size: 9px;
		fill: #fff;
	}
	.pair {
		font-size: 10px;
		fill: #fff;
	}
	.spread,
	.sl {
		font-family: 'Liberation Sans', Arial, sans-serif;
	}
	.spread {
		font-size: 16px;
		fill: #ff0000;
	}
	.sl {
		font-size: 19px;
		fill: #ed1c24;
	}
	.tag {
		font-size: 16px;
		fill: #12bcc4;
	}
	.note {
		direction: rtl;
		font-family: 'DejaVu Sans', sans-serif;
		font-size: 14px;
		text-anchor: middle;
	}
	.green {
		fill: #22b14c;
	}
	.red {
		fill: #ed1c24;
	}
	.trade {
		position: absolute;
		top: 20px;
		left: 6px;
		display: grid;
		grid-template-columns: 44px 99px 44px;
		color: #fff;
	}
	.side-btn {
		height: 23px;
		padding-bottom: 2px;
		border: 1px solid #d02020;
		border-bottom: 0;
		background: linear-gradient(#ff5a5a, #e83434);
		font-size: 11px;
	}
	.spin {
		display: flex;
		box-sizing: border-box;
		height: 20px;
		margin: 0 2px;
		border: 1px solid #fff;
	}
	.spin button {
		width: 19px;
		background: linear-gradient(#f4f4f4, #cfcfcf);
	}
	.spin span {
		display: block;
		width: 0;
		margin: 0 auto;
		border: 3px solid transparent;
	}
	.spin .down {
		border-top-color: #5a6fb5;
		border-bottom: 0;
	}
	.spin .up {
		border-bottom-color: #5a6fb5;
		border-top: 0;
	}
	.spin input {
		flex: 1;
		min-width: 0;
		padding: 0 5px 0 0;
		border: 0;
		background: #fff;
		font: inherit;
		text-align: right;
	}
	.quotes {
		display: grid;
		grid-column: 1 / -1;
		grid-template-columns: 1fr 1fr;
		gap: 2px;
	}
	.quote {
		display: flex;
		align-items: flex-end;
		justify-content: flex-end;
		gap: 4px;
		box-sizing: border-box;
		height: 33px;
		padding-right: 9px;
		background: linear-gradient(#e03030, #ad0000);
		border: 1px solid #b01010;
		border-top: 0;
	}
	.quote b {
		font-size: 11px;
		line-height: 15px;
		padding-bottom: 2px;
	}
	.quote span {
		font-size: 28px;
		line-height: 33px;
	}
	.quote sup {
		align-self: flex-start;
		font-size: 11px;
		font-weight: 700;
		line-height: 14px;
	}
	.tabs {
		display: grid;
		grid-template-columns: 96px 92px 88px 88px 96px 88px 92px 1fr;
		height: 18px;
		border-top: 1px solid #000;
		color: #707070;
	}
	.tabs > button {
		height: 14px;
		margin-top: 2px;
		border-right: 1px solid #707070;
		line-height: 14px;
	}
	.tabs > button:nth-child(6) {
		border-right: 0;
	}
	.tabs > .active {
		height: 19px;
		margin-top: -1px;
		border: 1px solid #000;
		border-top: 0;
		background: #fff;
		color: #000;
		line-height: 19px;
	}
	.pager {
		display: flex;
		align-items: center;
		justify-content: flex-end;
		gap: 13px;
		padding-right: 7px;
	}
	.pager svg {
		display: block;
		width: 6px;
		height: 8px;
		fill: #888;
	}
	footer {
		height: 4px;
		border-top: 1px solid #fff;
		border-bottom: 1px solid #a0a0a0;
	}
</style>
